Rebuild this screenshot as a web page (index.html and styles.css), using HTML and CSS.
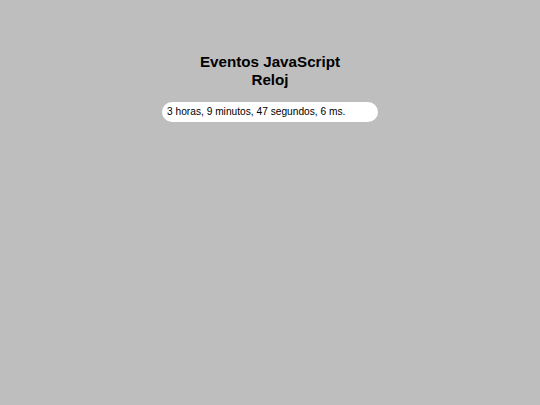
FILE: index.html
```html
<!DOCTYPE html>
<html lang="es">
<head>
  <meta charset="UTF-8" />
  <title>Eventos JavaScript - Reloj</title>
  <link rel="stylesheet" href="styles.css">
</head>
<body>
  <header>
    <h1>Eventos JavaScript<br>Reloj</h1>
  </header>

  <div class="reloj" id="reloj">3 horas, 9 minutos, 47 segundos, 6 ms.</div>
</body>
</html>
```

FILE: styles.css
```css
body {
  margin: 0;
  padding: 0;
  font-family: 'Liberation Sans', Arial, sans-serif;
  background-color: #bebebe;
  color: #000;
  display: flex;
  flex-direction: column;
  align-items: center;
  min-height: 100vh;
}

header {
  padding-top: 53px;
  text-align: center;
}

h1 {
  margin: 0;
  font-size: 15.2px;
  line-height: 18px;
  font-weight: bold;
}

.reloj {
  margin-top: 13px;
  width: 211px;
  height: 20px;
  line-height: 20px;
  padding-left: 5px;
  background-color: #fff;
  border-radius: 10px;
  font-size: 10.2px;
}
```
